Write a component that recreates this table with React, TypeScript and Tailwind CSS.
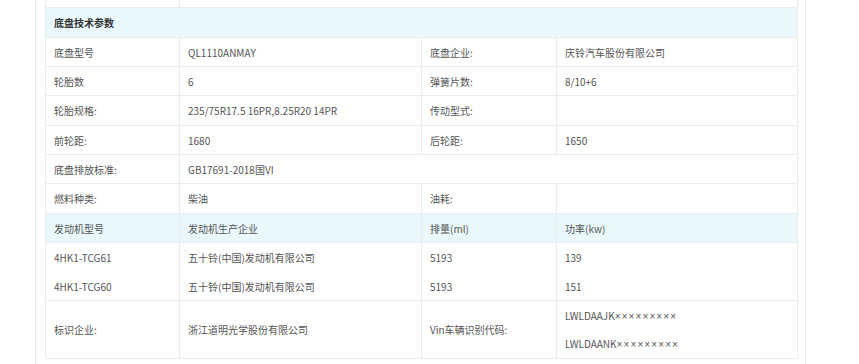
import React from 'react';

type Row = { cells: string[]; head?: boolean };

const font = { fontFamily: '"Noto Sans CJK SC", "Open Sans", sans-serif' };

const widths = ['w-[134px]', 'w-[242px]', 'w-[135px]', 'w-[240px]'];

const rows: Row[] = [
  { cells: ['底盘型号', 'QL1110ANMAY', '底盘企业:', '庆铃汽车股份有限公司'] },
  { cells: ['轮胎数', '6', '弹簧片数:', '8/10+6'] },
  { cells: ['轮胎规格:', '235/75R17.5 16PR,8.25R20 14PR', '传动型式:', ''] },
  { cells: ['前轮距:', '1680', '后轮距:', '1650'] },
];

const Cell: React.FC<{ w: string; last?: boolean; children?: React.ReactNode }> = ({ w, last, children }) => (
  <div className={`${w} ${last ? '' : 'border-r'} border-[#ebebeb] pl-2 flex flex-col justify-center shrink-0`}>
    {children}
  </div>
);

const StdRow: React.FC<{ cells: string[]; h: string; bg?: string }> = ({ cells, h, bg = 'bg-white' }) => (
  <div className={`flex ${h} ${bg} border-b border-[#ebebeb]`}>
    {cells.map((c, i) => (
      <Cell key={i} w={widths[i]} last={i === 3}>
        {c}
      </Cell>
    ))}
  </div>
);

const Vin: React.FC<{ prefix: string }> = ({ prefix }) => (
  <span>
    {prefix}
    <span className="tracking-[1.1px]" style={{ fontFamily: '"Liberation Sans", sans-serif' }}>
      ×××××××××
    </span>
  </span>
);

export default function App() {
  return (
    <div className="w-[859px] h-[364px] bg-white overflow-hidden text-[10px] text-[#555]" style={font}>
      <div className="ml-[35px] w-[771px] h-full border-x border-[#e8e8e8] pl-[9px]">
        <div className="w-[753px] border-x border-[#ebebeb]">
          <div className="flex h-[8px] border-b border-[#ebebeb]">
            <div className="w-[134px] border-r border-[#ebebeb]" />
          </div>
          <div className="h-[30px] bg-[#e8f8fd] border-b border-[#ebebeb] flex items-center pl-2 font-bold text-[#333]">
            底盘技术参数
          </div>
          <StdRow cells={rows[0].cells} h="h-[29px]" />
          <StdRow cells={rows[1].cells} h="h-[29px]" />
          <StdRow cells={rows[2].cells} h="h-[30px]" />
          <StdRow cells={rows[3].cells} h="h-[29px]" />
          <div className="flex h-[29px] border-b border-[#ebebeb]">
            <Cell w="w-[134px]">底盘排放标准:</Cell>
            <div className="flex-1 pl-2 flex items-center">GB17691-2018国VI</div>
          </div>
          <StdRow cells={['燃料种类:', '柴油', '油耗:', '']} h="h-[30px]" />
          <StdRow cells={['发动机型号', '发动机生产企业', '排量(ml)', '功率(kw)']} h="h-[29px]" bg="bg-[#e8f8fd]" />
          <div className="flex h-[58px] border-b border-[#ebebeb]">
            {[
              ['4HK1-TCG61', '4HK1-TCG60'],
              ['五十铃(中国)发动机有限公司', '五十铃(中国)发动机有限公司'],
              ['5193', '5193'],
              ['139', '151'],
            ].map((pair, i) => (
              <Cell key={i} w={widths[i]} last={i === 3}>
                <div className="h-[29px] flex items-center">{pair[0]}</div>
                <div className="h-[28px] flex items-center">{pair[1]}</div>
              </Cell>
            ))}
          </div>
          <div className="flex h-[58px] border-b border-[#ebebeb]">
            <Cell w="w-[134px]">标识企业:</Cell>
            <Cell w="w-[242px]">浙江道明光学股份有限公司</Cell>
            <Cell w="w-[135px]">Vin车辆识别代码:</Cell>
            <Cell w="w-[240px]" last>
              <div className="h-[29px] flex items-center">
                <Vin prefix="LWLDAAJK" />
              </div>
              <div className="h-[28px] flex items-center">
                <Vin prefix="LWLDAANK" />
              </div>
            </Cell>
          </div>
        </div>
      </div>
    </div>
  );
}
